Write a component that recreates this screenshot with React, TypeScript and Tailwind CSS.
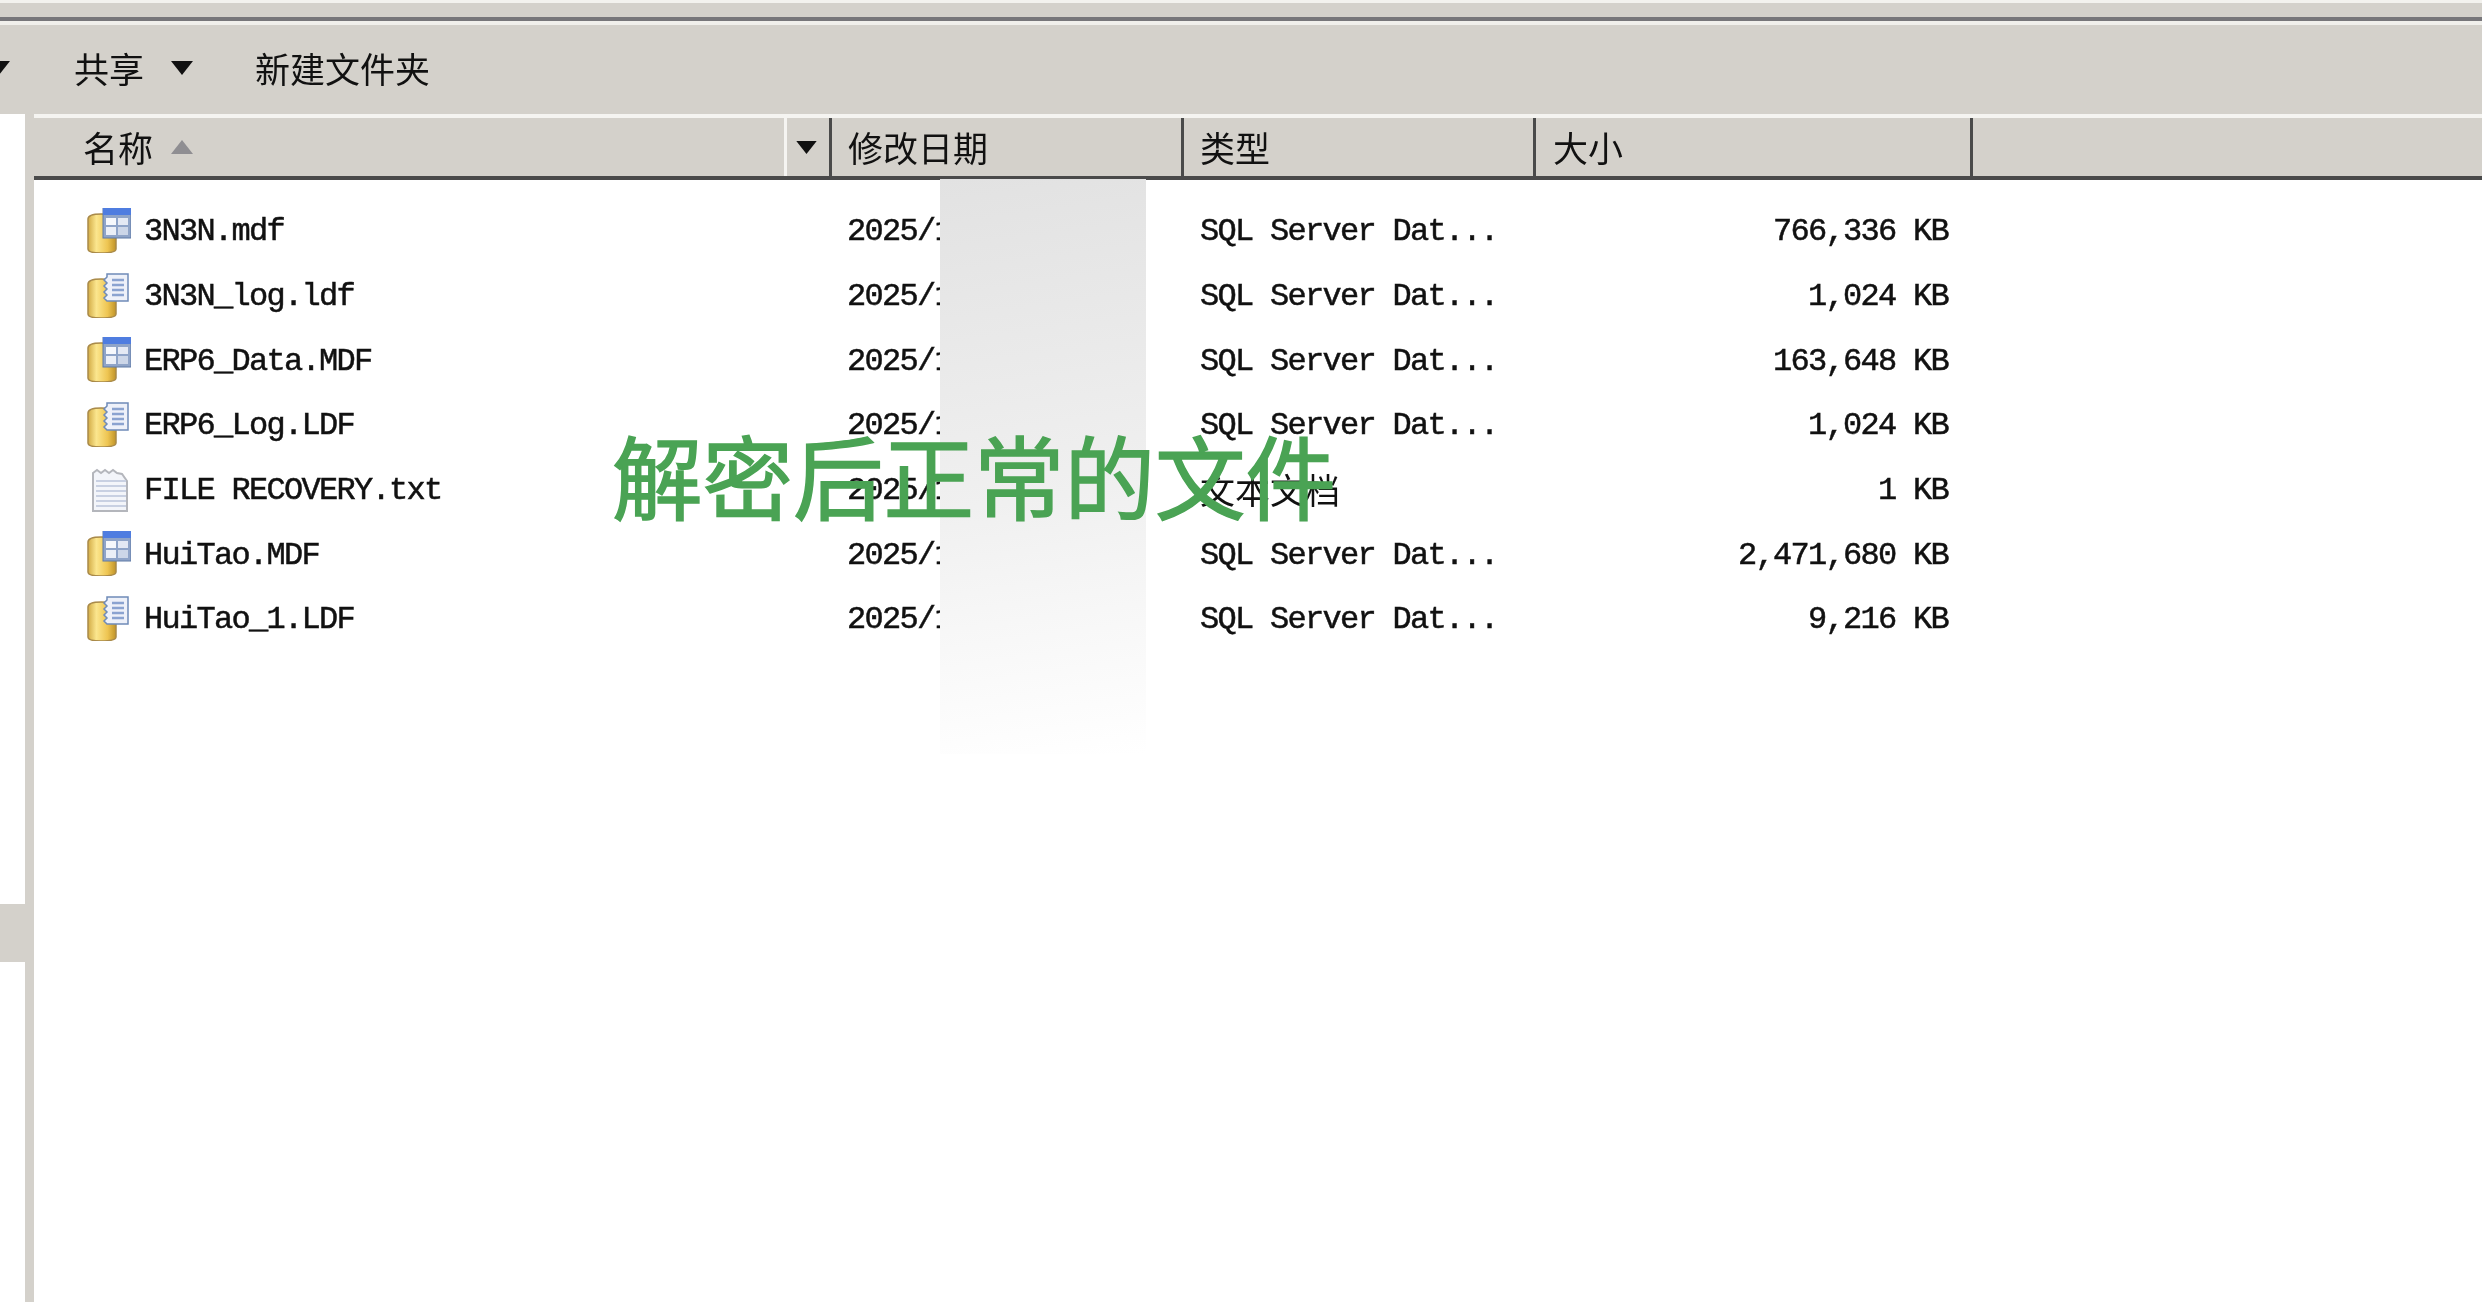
const files = [
  { name: '3N3N.mdf', icon: 'data', type: 'SQL Server Dat...', size: '766,336 KB' },
  { name: '3N3N_log.ldf', icon: 'log', type: 'SQL Server Dat...', size: '1,024 KB' },
  { name: 'ERP6_Data.MDF', icon: 'data', type: 'SQL Server Dat...', size: '163,648 KB' },
  { name: 'ERP6_Log.LDF', icon: 'log', type: 'SQL Server Dat...', size: '1,024 KB' },
  { name: 'FILE RECOVERY.txt', icon: 'txt', type: '文本文档', size: '1 KB' },
  { name: 'HuiTao.MDF', icon: 'data', type: 'SQL Server Dat...', size: '2,471,680 KB' },
  { name: 'HuiTao_1.LDF', icon: 'log', type: 'SQL Server Dat...', size: '9,216 KB' },
]

const cjk = "font-['Noto_Sans_CJK_SC','Noto_Sans',sans-serif]"
const mono = "font-['Liberation_Mono','Noto_Sans_CJK_SC',monospace]"

function Triangle({ className }: { className: string }) {
  return (
    <svg viewBox="0 0 22 14" className={className} fill="currentColor">
      <path d="M0 0h22L11 14z" />
    </svg>
  )
}

function Cylinder() {
  return (
    <>
      <defs>
        <linearGradient id="can" x1="0" x2="1" y1="0" y2="0">
          <stop offset="0" stopColor="#d2ab45" />
          <stop offset="0.3" stopColor="#fbe68e" />
          <stop offset="0.7" stopColor="#eec552" />
          <stop offset="1" stopColor="#c09328" />
        </linearGradient>
      </defs>
      <path d="M1 11c0-3 4-5 13-5s15 2 15 5v30c0 3-6 4-15 4S1 44 1 41z" fill="url(#can)" stroke="#a98a4a" strokeWidth="1.5" />
    </>
  )
}

function FileIcon({ kind }: { kind: string }) {
  if (kind === 'txt') {
    return (
      <svg viewBox="0 0 44 45" className="w-[44px] h-[45px] shrink-0 mt-[-4px]">
        <path d="M6 6l4-3 4 3 4-3 4 3 4-3 4 3 5 1 5 7v30H6z" fill="#f3f5fa" stroke="#b4b6bc" strokeWidth="2" />
        <path d="M9 14h30M9 19h30M9 24h30M9 29h30M9 34h30M9 39h30" stroke="#c8d0e2" strokeWidth="2" />
      </svg>
    )
  }
  if (kind === 'data') {
    return (
      <svg viewBox="0 0 44 45" className="w-[44px] h-[45px] shrink-0 mt-[-4px]">
        <Cylinder />
        <rect x="16" y="0" width="28" height="30" fill="#8fa4c8" stroke="#5f7aa6" strokeWidth="1" />
        <rect x="16" y="0" width="28" height="7" fill="#4f7de0" />
        <rect x="19" y="10" width="10" height="7" fill="#f6f8fc" />
        <rect x="31" y="10" width="10" height="7" fill="#e4e9f4" />
        <rect x="19" y="19" width="10" height="8" fill="#ebeff7" />
        <rect x="31" y="19" width="10" height="8" fill="#ccd6e8" />
      </svg>
    )
  }
  return (
    <svg viewBox="0 0 44 45" className="w-[44px] h-[45px] shrink-0 mt-[-4px]">
      <Cylinder />
      <path d="M20 1h21v27H20l-3-3 3-3-3-3 3-3-3-3 3-3-3-3 3-3z" fill="#eef1f9" stroke="#6f8bb8" strokeWidth="1.5" />
      <path d="M25 7h12M25 12h12M25 17h12M25 22h12" stroke="#8ba3d0" strokeWidth="2.5" />
    </svg>
  )
}

function HeaderCell({ label, className }: { label: string; className: string }) {
  return (
    <div className={`${className} flex items-center border-r-[3px] border-[#4a4a4a] text-[35px] text-[#111] ${cjk}`}>
      {label}
    </div>
  )
}

export default function App() {
  return (
    <div className="relative w-[2482px] h-[1302px] overflow-hidden bg-white">
      <div className="flex flex-col h-full blur-[0.7px]">
        {/* Title strip */}
        <div className="h-[3px] bg-[#f3f2ee]" />
        <div className="h-[14px] bg-[#d4d1cb]" />
        <div className="h-[4px] bg-[#77767a]" />
        <div className="h-[4px] bg-[#f0efeb]" />

        {/* Toolbar */}
        <div className={`h-[89px] pb-[3px] bg-[#d4d1cb] flex items-center text-[35px] text-[#111] ${cjk}`}>
          <Triangle className="w-[22px] h-[14px] ml-[-12px] text-[#111]" />
          <span className="ml-[64px]">共享</span>
          <Triangle className="w-[22px] h-[14px] ml-[27px] text-[#111]" />
          <span className="ml-[62px]">新建文件夹</span>
        </div>

        <div className="flex flex-1 min-h-0">
          {/* Nav pane edge */}
          <div className="w-[34px] shrink-0 flex">
            <div className="w-[25px] bg-white pt-[790px]">
              <div className="h-[58px] bg-[#d4d1cb]" />
            </div>
            <div className="w-[9px] bg-[#d4d1cb]" />
          </div>

          <div className="flex-1 flex flex-col">
            {/* Column headers */}
            <div className="flex h-[66px] bg-[#d4d1cb] border-t-[4px] border-[#f5f4f1] border-b-[4px] border-b-[#4a4a4a]">
              <div className={`w-[753px] flex items-center pl-[49px] text-[35px] text-[#111] border-r-[3px] border-[#f5f4f1] ${cjk}`}>
                名称
                <Triangle className="w-[22px] h-[14px] ml-[18px] rotate-180 text-[#8f8e92]" />
              </div>
              <div className="w-[45px] flex items-center pl-[9px] border-r-[3px] border-[#4a4a4a]">
                <Triangle className="w-[21px] h-[13px] text-[#111]" />
              </div>
              <HeaderCell label="修改日期" className="w-[352px] pl-[16px]" />
              <HeaderCell label="类型" className="w-[352px] pl-[16px]" />
              <HeaderCell label="大小" className="w-[437px] pl-[17px]" />
            </div>

            {/* File rows */}
            <div className={`pt-[20px] text-[32px] tracking-[-1.7px] text-[#111] [-webkit-text-stroke:0.5px_#111] ${mono}`}>
              {files.map((f) => (
                <div key={f.name} className="flex items-center h-[64.7px]">
                  <div className="w-[813px] shrink-0 flex items-center pl-[53px] gap-[13px]">
                    <FileIcon kind={f.icon} />
                    <span className="whitespace-pre">{f.name}</span>
                  </div>
                  <div className="w-[353px] shrink-0">2025/1</div>
                  <div className={`w-[400px] shrink-0 ${f.icon === 'txt' ? `${cjk} text-[35px] tracking-normal mt-[-3px] [-webkit-text-stroke:0px]` : ''}`}>{f.type}</div>
                  <div className="w-[348px] shrink-0 text-right">{f.size}</div>
                </div>
              ))}
            </div>
          </div>
        </div>

        {/* Redaction smear over the date column */}
        <div className="absolute left-[940px] top-[179px] w-[206px] h-[575px] bg-[linear-gradient(172deg,#e2e2e2,#f0f0f0_55%,#f7f7f7_75%,#ffffff_100%)]" />
      </div>

      {/* Annotation */}
      <div className={`absolute left-[612px] top-[414px] text-[90.5px] leading-[120px] text-[#4aa354] whitespace-nowrap [-webkit-text-stroke:1.5px_#4aa354] ${cjk}`}>
        解密后正常的文件
      </div>
    </div>
  )
}
